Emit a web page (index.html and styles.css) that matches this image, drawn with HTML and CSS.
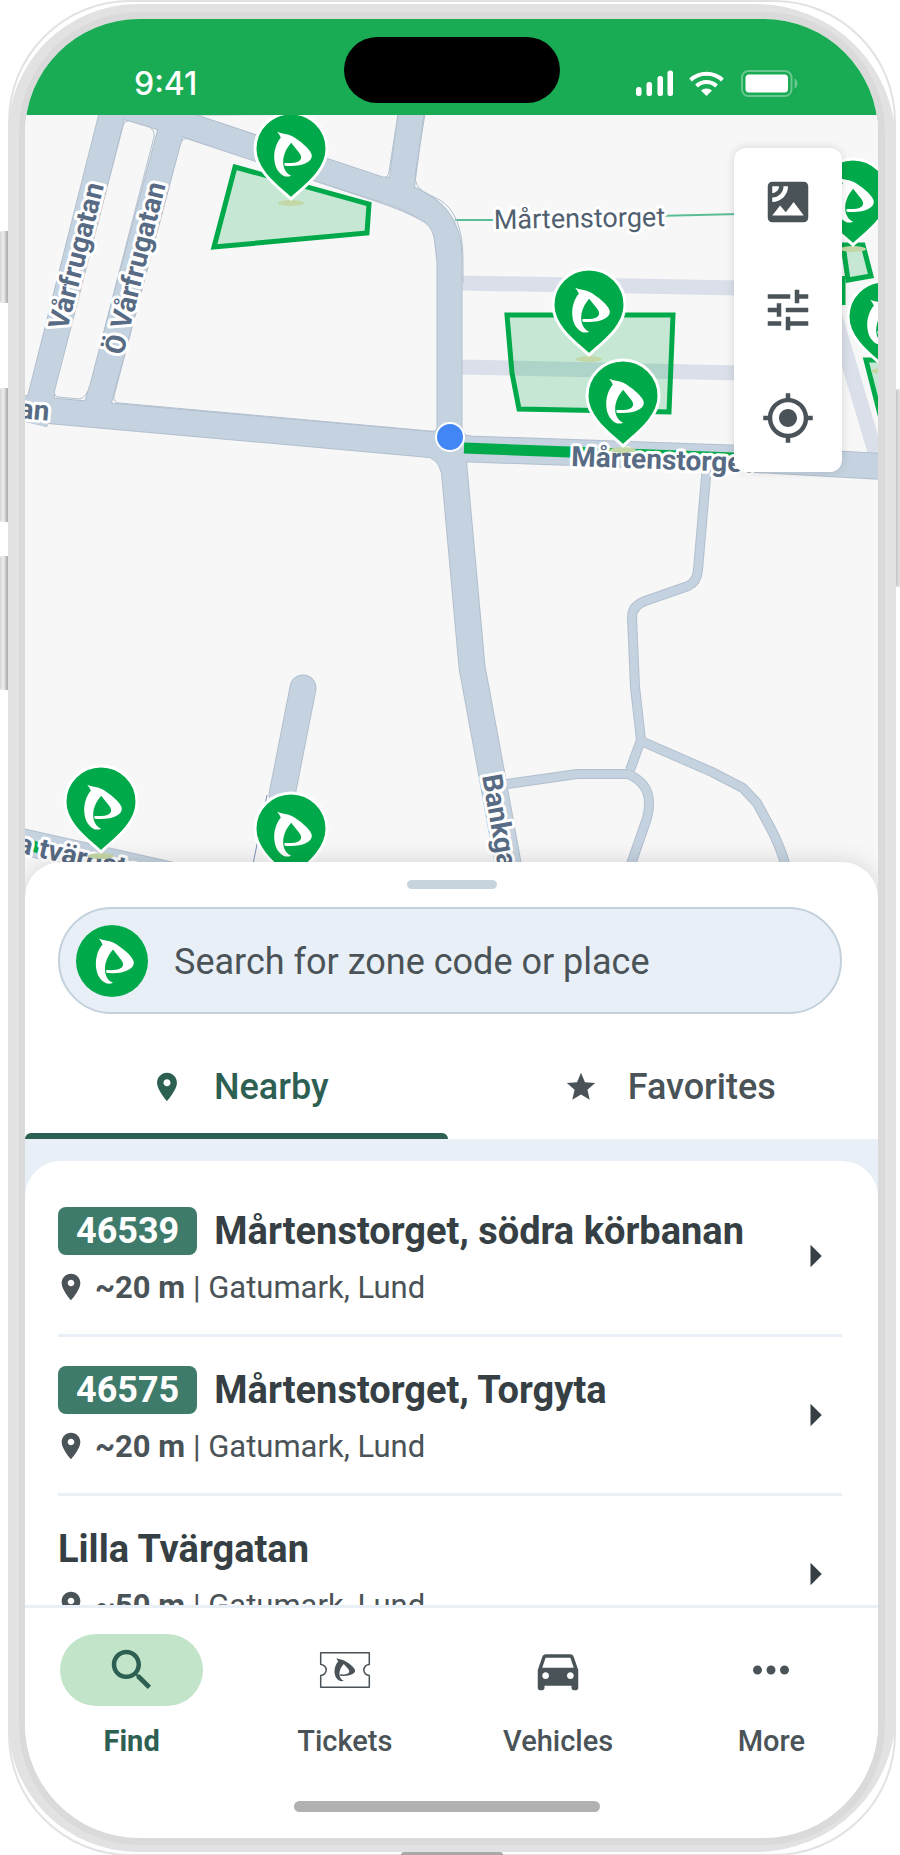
FILE: index.html
```html
<!DOCTYPE html>
<html lang="en">
<head>
  <meta charset="utf-8">
  <meta name="viewport" content="width=device-width">
  <title>Find parking</title>
  <link rel="stylesheet" href="styles.css">
</head>
<body>

    <!-- shared icons -->
    <svg class="sprite" aria-hidden="true">
        <symbol id="logo" viewBox="18 15 214 214">
            <path id="logo-path" fill="currentColor" d="M86 55C99 61 114 60 130 68C154 82 181 103 189 122C194 138 178 150 153 156C138 159 120 159 108 157L108 149C126 150 143 149 153 142C161 135 158 126 152 118L128 88C113 105 104 126 104 146C104 164 112 181 128 187C120 190 112 191 105 187C85 176 77 155 77 128C78 105 86 85 97 73Q93 63 86 55Z"/>
        </symbol>
        <symbol id="place" viewBox="0 0 24 24">
            <path fill="currentColor" d="M12 2C8.13 2 5 5.13 5 9c0 5.25 7 13 7 13s7-7.75 7-13c0-3.87-3.13-7-7-7zm0 9.500c-1.380 0-2.500-1.120-2.500-2.500s1.120-2.500 2.500-2.500 2.500 1.120 2.500 2.500-1.120 2.500-2.500 2.500z"/>
        </symbol>
        <symbol id="arrow" viewBox="0 0 24 24">
            <path fill="currentColor" d="M10 17l5-5-5-5z"/>
        </symbol>
    </svg>

    <div class="phone">
        <span class="side_button mute"></span>
        <span class="side_button volume_up"></span>
        <span class="side_button volume_down"></span>
        <span class="side_button power"></span>
        <span class="port"></span>

        <div class="bezel">
        <div class="screen">

            <header class="status_bar">
                <div class="time">9:41</div>
                <div class="island"></div>
                <svg class="status_icons" viewBox="0 0 162 28" aria-hidden="true">
                    <g fill="#fff">
                        <rect x="0" y="18" width="5.500" height="9" rx="2.500"/>
                        <rect x="10.500" y="13" width="5.500" height="14" rx="2.500"/>
                        <rect x="21.500" y="7" width="5.500" height="20" rx="2.500"/>
                        <rect x="31.500" y="1.500" width="5.500" height="25.500" rx="2.500"/>
                        <path d="M70.500 27l-5.500-5.500a8.500 8.500 0 0 1 11 0z"/>
                        <rect x="109.500" y="5.500" width="42.500" height="18" rx="3.500"/>
                    </g>
                    <g fill="none" stroke="#fff" stroke-width="4">
                        <path d="M54.500 11a23.500 23.500 0 0 1 32 0"/>
                        <path d="M60.500 17a14.500 14.500 0 0 1 20 0"/>
                    </g>
                    <g opacity=".35">
                        <rect x="106" y="2" width="49.500" height="25" rx="6.500" fill="none" stroke="#fff" stroke-width="2"/>
                        <path fill="#fff" d="M158.500 9.500q3 1 3 5t-3 5z"/>
                    </g>
                </svg>
            </header>

            <main class="content">
            <section class="map_area" aria-label="Map">
                <svg class="map" viewBox="25 115 853 785">
                    <defs>
                        <g id="streets-wide">
                            <path d="M112 115L34 424"/>
                            <path d="M174 119L97 407"/>
                            <path d="M20 408L436 445L470 449L730 458L890 467"/>
                            <path d="M80 93L191 126L254 148L392 192C432 206 449 222 449 258V445"/>
                            <path d="M412 105L401 190"/>
                            <path d="M452 445L472 667L491 770L511 880"/>
                            <path stroke-linecap="round" d="M303 688L282 795"/>
                            <path d="M15 840L170 875"/>
                        </g>
                        <g id="streets-small">
                            <path d="M707 465L698 570Q697 582 688 586L645 601Q632 606 632 617L635 687L641 740L630 770"/>
                            <path d="M641 741L712 772L743 788L757 803L770 827Q780 845 787 870"/>
                            <path d="M500 785L577 774L628 774Q649 783 649 803Q649 814 645 824L629 870"/>
                        </g>
                        <g id="pin">
                            <ellipse class="pin_shadow" cx="0" cy="4" rx="13" ry="3"/>
                            <path class="pin_body" d="M0 0C-10-10-36-27-36-50A36 36 0 0 1 36-50C36-27 10-10 0 0Z"/>
                            <use href="#logo-path" class="pin_logo" transform="translate(-42.500 -85.700) scale(.3333)"/>
                        </g>
                    </defs>

                    <g class="alley">
                        <path d="M460 283L740 288"/>
                        <path d="M460 367L740 373"/>
                        <path d="M830 300L882 475"/>
                    </g>
                    <path class="footpath" d="M455 220H495M655 216L740 214"/>

                    <use href="#streets-wide" class="casing wide"/>
                    <use href="#streets-small" class="casing small"/>
                    <path class="road_fill" d="M424 456Q438 458 441 472L452 472V450ZM462 470Q463 461 472 461L462 452ZM462 428Q463 437 476 438L462 445Z"/>
                    <use href="#streets-wide" class="road wide"/>
                    <use href="#streets-small" class="road small"/>

                    <!-- blocks between the streets -->
                    <path class="block" d="M129 121L149 127Q155 130 154 137L90 385Q86 398 80 399L58 397Q53 396 55 389L123 126Q125 120 129 121Z"/>
                    <path class="block" d="M188 139L372 200Q408 212 424 222Q434 228 435 245L437 262V428Q436 432 430 431L119 403Q113 402 114 396L180 146Q182 137 188 139Z"/>
                    <path class="block" d="M197 115L383 177Q388 178 389 172L398 114Z"/>
                    <path class="road_edge" d="M425 114L415 175Q415 187 424 192L440 200Q463 214 463 260V283"/>
                    <path class="lane_edge" d="M267 795L253 864"/>

                    <g class="zone">
                        <path d="M235 167L369 204L367 233L214 247Z"/>
                        <path d="M507 315H673L669 412L519 409L512 373Z"/>
                        <path d="M843 245H863L871 276L848 280Z"/>
                        <path d="M866 360L884 430V360Z"/>
                        <path d="M843 276V305"/>
                    </g>
                    <path class="zone_street" d="M464 448L570 452L735 458"/>
                    <path class="zone_street" d="M33 846L39 848"/>

                    <g class="street_name">
                        <text transform="translate(67 331) rotate(-75.700)">Vårfrugatan</text>
                        <text transform="translate(123 356) rotate(-76)">Ö Vårfrugatan</text>
                        <text transform="translate(18 418) rotate(5)">an</text>
                        <text transform="translate(571 466) rotate(2)">Mårtenstorget</text>
                        <text transform="translate(482 776) rotate(80)">Bankgatan</text>
                        <text transform="translate(16 852) rotate(13)">a tvärgatan</text>
                        <text class="square_name" transform="translate(494 229) rotate(-1)">Mårtenstorget</text>
                    </g>

                    <circle class="position" cx="450" cy="437" r="14"/>

                    <use href="#pin" x="291" y="199"/>
                    <use href="#pin" x="589" y="355"/>
                    <use href="#pin" x="623" y="446"/>
                    <use href="#pin" x="853" y="245"/>
                    <use href="#pin" x="884" y="367"/>
                    <use href="#pin" x="101" y="852"/>
                    <use href="#pin" x="291" y="879"/>
                </svg>

                <div class="map_tools">
                    <button type="button" aria-label="Satellite view">
                        <svg viewBox="0 0 24 24"><path fill="currentColor" d="M19 3H5c-1.100 0-2 .9-2 2v14c0 1.100.9 2 2 2h14c1.100 0 2-.9 2-2V5c0-1.100-.9-2-2-2zM5 4.990h3C8 6.650 6.660 8 5 8V4.990zM5 12v-2c2.760 0 5-2.250 5-5.010h2C12 8.860 8.870 12 5 12zm0 6l3.500-4.500 2.500 3.010L14.500 12l4.500 6H5z"/></svg>
                    </button>
                    <button type="button" aria-label="Filter">
                        <svg viewBox="0 0 24 24"><path fill="currentColor" d="M3 17v2h6v-2H3zM3 5v2h10V5H3zm10 16v-2h8v-2h-8v-2h-2v6h2zM7 9v2H3v2h4v2h2V9H7zm14 4v-2H11v2h10zm-6-4h2V7h4V5h-4V3h-2v6z"/></svg>
                    </button>
                    <button type="button" aria-label="My location">
                        <svg viewBox="0 0 24 24"><path fill="currentColor" d="M12 8c-2.210 0-4 1.790-4 4s1.790 4 4 4 4-1.790 4-4-1.790-4-4-4zm8.940 3c-.46-4.170-3.770-7.480-7.940-7.940V1h-2v2.060C6.830 3.520 3.520 6.830 3.060 11H1v2h2.060c.46 4.170 3.770 7.480 7.940 7.940V23h2v-2.060c4.170-.46 7.480-3.770 7.940-7.940H23v-2h-2.060zM12 19c-3.870 0-7-3.130-7-7s3.130-7 7-7 7 3.130 7 7-3.130 7-7 7z"/></svg>
                    </button>
                </div>
            </section>

            <section class="sheet">
                <div class="handle"></div>

                <label class="search">
                    <span class="search_logo"><svg><use href="#logo"/></svg></span>
                    <input type="text" aria-label="Search" placeholder="Search for zone code or place">
                </label>

                <div class="tabs">
                    <button type="button" class="tab active">
                        <svg><use href="#place"/></svg>
                        <span>Nearby</span>
                    </button>
                    <button type="button" class="tab">
                        <svg viewBox="0 0 24 24"><path fill="currentColor" d="M12 17.270L18.180 21l-1.640-7.030L22 9.240l-7.190-.61L12 2 9.190 8.630 2 9.240l5.460 4.730L5.820 21z"/></svg>
                        <span>Favorites</span>
                    </button>
                </div>

                <div class="list_area">
                    <ul class="list">
                        <li><a href="#" class="place">
                            <div class="info">
                                <div class="title"><span class="code">46539</span>Mårtenstorget, södra körbanan</div>
                                <div class="sub"><svg><use href="#place"/></svg><span><b>~20 m</b> | Gatumark, Lund</span></div>
                            </div>
                            <svg class="arrow"><use href="#arrow"/></svg>
                        </a></li>
                        <li><a href="#" class="place">
                            <div class="info">
                                <div class="title"><span class="code">46575</span>Mårtenstorget, Torgyta</div>
                                <div class="sub"><svg><use href="#place"/></svg><span><b>~20 m</b> | Gatumark, Lund</span></div>
                            </div>
                            <svg class="arrow"><use href="#arrow"/></svg>
                        </a></li>
                        <li><a href="#" class="place">
                            <div class="info">
                                <div class="title">Lilla Tvärgatan</div>
                                <div class="sub"><svg><use href="#place"/></svg><span><b>~50 m</b> | Gatumark, Lund</span></div>
                            </div>
                            <svg class="arrow"><use href="#arrow"/></svg>
                        </a></li>
                    </ul>
                </div>
            </section>
            </main>

            <nav class="nav_bar">
                <a href="#" class="nav_item active">
                    <span class="nav_icon"><svg viewBox="0 0 24 24"><path fill="currentColor" d="M15.500 14h-.79l-.28-.27C15.410 12.590 16 11.110 16 9.500 16 5.910 13.090 3 9.500 3S3 5.910 3 9.500 5.910 16 9.500 16c1.610 0 3.090-.59 4.230-1.570l.27.28v.79l5 4.990L20.490 19l-4.990-5zm-6 0C7.010 14 5 11.990 5 9.500S7.010 5 9.500 5 14 7.010 14 9.500 11.990 14 9.500 14z"/></svg></span>
                    <span>Find</span>
                </a>
                <a href="#" class="nav_item">
                    <span class="nav_icon"><svg viewBox="0 0 54 54">
                        <path fill="none" stroke="currentColor" stroke-width="1.500" stroke-linejoin="round" d="M2.700 9.700H51.300V21.500A5.500 5.500 0 0 0 51.300 32.500V44.300H2.700V32.500A5.500 5.500 0 0 0 2.700 21.500Z"/>
                        <use href="#logo-path" transform="translate(2.500 6) scale(.182 .17)"/>
                    </svg></span>
                    <span>Tickets</span>
                </a>
                <a href="#" class="nav_item">
                    <span class="nav_icon"><svg viewBox="0 0 24 24"><path fill="currentColor" d="M18.920 6.010C18.720 5.420 18.160 5 17.500 5h-11c-.66 0-1.210.42-1.420 1.010L3 12v8c0 .55.45 1 1 1h1c.55 0 1-.45 1-1v-1h12v1c0 .55.45 1 1 1h1c.55 0 1-.45 1-1v-8l-2.080-5.990zM6.500 16c-.83 0-1.500-.67-1.500-1.500S5.670 13 6.500 13s1.500.67 1.500 1.500S7.330 16 6.500 16zm11 0c-.83 0-1.500-.67-1.500-1.500s.67-1.500 1.500-1.500 1.500.67 1.500 1.500-.67 1.500-1.500 1.500zM5 11l1.500-4.500h11L19 11H5z"/></svg></span>
                    <span>Vehicles</span>
                </a>
                <a href="#" class="nav_item">
                    <span class="nav_icon"><svg viewBox="0 0 24 24"><path fill="currentColor" d="M6 10c-1.100 0-2 .9-2 2s.9 2 2 2 2-.9 2-2-.9-2-2-2zm12 0c-1.100 0-2 .9-2 2s.9 2 2 2 2-.9 2-2-.9-2-2-2zm-6 0c-1.100 0-2 .9-2 2s.9 2 2 2 2-.9 2-2-.9-2-2-2z"/></svg></span>
                    <span>More</span>
                </a>
            </nav>
            <div class="home_bar"></div>

        </div>
        </div>
    </div>

</body>
</html>
```
FILE: styles.css
```css
*{
    box-sizing: border-box;
}

body{
    margin: 0;
    padding: 4px 4px 3px 8px;
    background-color: #fff;
    color: #4a5357;
    font-family: Roboto, "Liberation Sans", sans-serif;
    overflow: hidden;
}

svg{
    display: block;
}

a{
    color: inherit;
    text-decoration: none;
}

button{
    border: 0;
    padding: 0;
    background: none;
    color: inherit;
    font-family: inherit;
    cursor: pointer;
}

.sprite{
    position: absolute;
    width: 0;
    height: 0;
}

/* phone frame */
.phone{
    position: relative;
    display: flex;
    height: calc(100vh - 7px);
    padding: 8px 11px 7px;
    border-radius: 130px 140px 140px 130px;
    background-color: #e2e2e2;
}

.phone::before{
    content: "";
    position: absolute;
    inset: -4px 0;
    border: 2px solid #e2e2e2;
    border-radius: 122px;
    z-index: -1;
}

.side_button{
    position: absolute;
    left: -8px;
    width: 8px;
    border-radius: 2px 0 0 2px;
    background: linear-gradient(to right, #d4d4d4, #efefef 40%, #a8a8a8);
}

.side_button.mute{
    top: 227px;
    height: 72px;
}

.side_button.volume_up{
    top: 384px;
    height: 134px;
}

.side_button.volume_down{
    top: 552px;
    height: 134px;
}

.side_button.power{
    left: auto;
    right: -4px;
    top: 385px;
    width: 4px;
    height: 198px;
    background: linear-gradient(to right, #c4c4c4, #e6e6e6);
}

.port{
    position: absolute;
    bottom: -3px;
    left: calc(50% - 51px);
    width: 102px;
    height: 3px;
    border-radius: 6px 6px 0 0;
    background-color: #a9a9a9;
}

.bezel{
    flex: 1;
    display: flex;
    min-width: 0;
    padding: 7px 7px 7px 6px;
    border-radius: 120px;
    background-color: #dadada;
}

.screen{
    flex: 1;
    display: flex;
    flex-direction: column;
    min-width: 0;
    border-radius: 114px;
    background-color: #fff;
    overflow: hidden;
}

/* status bar */
.status_bar{
    display: grid;
    grid-template-columns: 1fr 216px 1fr;
    flex: none;
    height: 96px;
    padding-top: 18px;
    background-color: #1aab55;
}

.time{
    align-self: end;
    padding: 0 0 11px 109px;
    color: #fff;
    font-family: Inter, sans-serif;
    font-size: 32px;
    font-weight: 500;
    line-height: 40px;
}

.island{
    height: 66px;
    border-radius: 33px;
    background-color: #000;
}

.status_icons{
    justify-self: end;
    align-self: end;
    width: 162px;
    height: 28px;
    margin: 0 80px 18px 0;
}

/* map */
.content{
    flex: 1;
    display: flex;
    flex-direction: column;
    min-height: 0;
}

.map_area{
    position: relative;
    flex: none;
    background-color: #f7f7f7;
}

.map{
    width: 100%;
    height: auto;
}

.casing{
    fill: none;
    stroke: #b2bfce;
}

.road{
    fill: none;
    stroke: #c5d3e0;
}

.casing.wide{
    stroke-width: 27px;
}

.road.wide{
    stroke-width: 25px;
}

.casing.small{
    stroke-width: 10px;
}

.road.small{
    stroke-width: 8px;
}

.road_fill{
    fill: #c5d3e0;
    stroke: #b2bfce;
}

.road_edge{
    fill: none;
    stroke: #b2bfce;
}

.lane_edge{
    fill: none;
    stroke: #7f8fbd;
}

.block{
    fill: #f7f7f7;
    stroke: #b2bfce;
}

.alley{
    fill: none;
    stroke: #dadfe9;
    stroke-width: 15px;
}

.footpath{
    stroke: #5bbd95;
    stroke-width: 2px;
}

.zone{
    fill: rgba(0, 170, 74, .2);
    stroke: #00aa4a;
    stroke-width: 5px;
}

.zone_street{
    fill: none;
    stroke: #00aa4a;
    stroke-width: 11px;
}

.street_name{
    fill: #586b84;
    stroke: #fff;
    stroke-width: 6px;
    stroke-linejoin: round;
    paint-order: stroke;
    font-size: 28px;
    font-weight: 700;
}

.square_name{
    fill: #51606f;
    font-size: 27px;
    font-weight: 400;
}

.position{
    fill: #4285f4;
    stroke: #fff;
    stroke-width: 2px;
}

.pin_shadow{
    fill: #c3d8a6;
}

.pin_body{
    fill: #00aa4a;
    stroke: #fff;
    stroke-width: 3px;
}

.pin_logo{
    color: #fff;
}

.map_tools{
    position: absolute;
    top: 33px;
    right: 36px;
    display: flex;
    flex-direction: column;
    border-radius: 12px;
    background-color: #fff;
    box-shadow: 0 0 10px rgba(0, 0, 0, .14);
}

.map_tools button{
    display: grid;
    place-items: center;
    width: 108px;
    height: 108px;
}

.map_tools svg{
    width: 54px;
    height: 54px;
}

/* bottom sheet */
.sheet{
    position: relative;
    flex: 1;
    display: flex;
    flex-direction: column;
    min-height: 0;
    margin-top: -38px;
    border-radius: 36px 36px 0 0;
    background-color: #fff;
    box-shadow: 0 0 24px rgba(0, 0, 0, .14);
}

.handle{
    flex: none;
    align-self: center;
    width: 90px;
    height: 9px;
    margin: 18px 0;
    border-radius: 5px;
    background-color: #c7d4de;
}

.search{
    flex: none;
    display: flex;
    align-items: center;
    gap: 26px;
    height: 107px;
    margin: 0 36px 0 33px;
    padding: 0 16px;
    border: 2px solid #c3d1dc;
    border-radius: 54px;
    background-color: #e8eff6;
}

.search_logo{
    flex: none;
    border-radius: 50%;
    background-color: #00aa4a;
    color: #fff;
}

.search_logo svg{
    width: 72px;
    height: 72px;
}

.search input{
    flex: 1;
    min-width: 0;
    border: 0;
    padding: 2px 0 0;
    outline: 0;
    background: none;
    color: #4a5357;
    font-family: inherit;
    font-size: 36px;
}

.search input::placeholder{
    color: #4a5357;
    opacity: 1;
}

.tabs{
    flex: none;
    display: grid;
    grid-template-columns: 1fr 1fr;
    gap: 8px;
    height: 125px;
}

.tab{
    display: flex;
    align-items: center;
    justify-content: center;
    gap: 30px;
    padding: 26px 0 0 6px;
    border-bottom: 6px solid transparent;
    font-size: 36px;
    font-weight: 500;
}

.tab svg{
    width: 34px;
    height: 34px;
}

.tab.active{
    position: relative;
    color: #2d5f52;
}

.tab.active::after{
    content: "";
    position: absolute;
    left: 0;
    right: 0;
    bottom: -6px;
    height: 6px;
    border-radius: 6px 6px 0 0;
    background-color: #2d5f52;
}

.list_area{
    flex: 1;
    display: flex;
    min-height: 0;
    padding-top: 22px;
    background-color: #e8eff6;
}

.list{
    flex: 1;
    margin: 0;
    padding: 17px 36px 0 33px;
    border-radius: 36px 36px 0 0;
    background-color: #fff;
    list-style: none;
    overflow: hidden;
}

.list li{
    border-bottom: 3px solid #e8eff6;
}

.place{
    display: flex;
    align-items: center;
    justify-content: space-between;
    height: 156px;
}

.info{
    display: flex;
    flex-direction: column;
    gap: 4px;
    padding-top: 6px;
}

.title{
    display: flex;
    align-items: center;
    gap: 17px;
    height: 52px;
    color: #363f43;
    font-size: 38px;
    font-weight: 700;
}

.code{
    padding: 0 18px;
    border-radius: 8px;
    background-color: #3e7b6a;
    color: #fff;
    font-size: 36px;
    line-height: 48px;
}

.sub{
    display: flex;
    align-items: center;
    gap: 8px;
    height: 52px;
    margin-left: -3px;
    font-size: 31px;
}

.sub svg{
    width: 32px;
    height: 32px;
}

.arrow{
    flex: none;
    width: 54px;
    height: 54px;
    color: #363f43;
}

/* bottom navigation */
.nav_bar{
    position: relative;
    flex: none;
    display: grid;
    grid-template-columns: repeat(4, 1fr);
    padding-top: 26px;
    border-top: 3px solid #e8eff6;
    background-color: #fff;
}

.nav_item{
    display: flex;
    flex-direction: column;
    align-items: center;
    gap: 15px;
    font-size: 29px;
    font-weight: 500;
    line-height: 40px;
}

.nav_item.active{
    color: #2d5f52;
    font-weight: 700;
}

.nav_icon{
    display: grid;
    place-items: center;
    width: 143px;
    height: 72px;
    border-radius: 36px;
}

.active .nav_icon{
    background-color: #c2e5ca;
}

.nav_icon svg{
    width: 54px;
    height: 54px;
}

.home_bar{
    flex: none;
    align-self: center;
    width: 306px;
    height: 11px;
    margin: 40px 10px 26px 0;
    border-radius: 6px;
    background-color: #b1b1b1;
}
```
